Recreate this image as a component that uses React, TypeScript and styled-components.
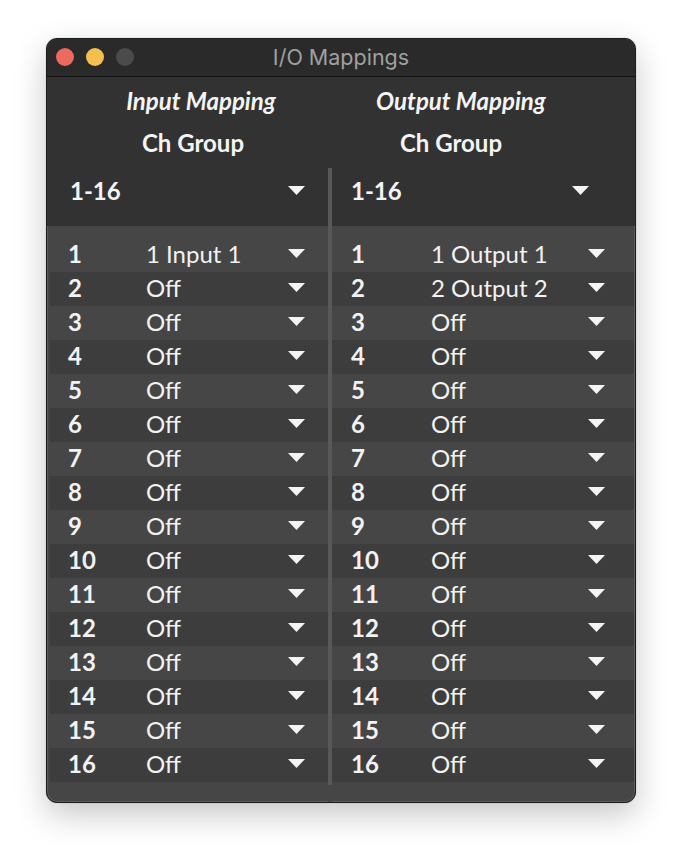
import React from "react";
import styled, { createGlobalStyle } from "styled-components";

const GlobalStyle = createGlobalStyle`
  body {
    margin: 0;
    background: #ffffff;
    font-family: Lato, "Open Sans", sans-serif;
  }
`;

const Page = styled.div`
  padding: 38px 0 0 46px;
  height: 858px;
  box-sizing: border-box;
`;

const Window = styled.div`
  width: 590px;
  height: 765px;
  box-sizing: border-box;
  border: 1px solid #1c1c1c;
  border-radius: 11px;
  overflow: hidden;
  background: #464646;
  box-shadow: inset 0 0 0 1px #5b5b5b, 0 12px 32px rgba(0, 0, 0, 0.22),
    0 0 1px rgba(0, 0, 0, 0.4);
  display: flex;
  flex-direction: column;
`;

const TitleBar = styled.div`
  height: 38px;
  flex-shrink: 0;
  display: flex;
  align-items: center;
  position: relative;
  background: #2a2a2a;
  border-bottom: 1px solid #111111;
  box-sizing: border-box;
  padding: 0 0 1px 9px;
`;

const Lights = styled.div`
  display: flex;
  gap: 12px;
`;

const Light = styled.span<{ $color: string }>`
  width: 18px;
  height: 18px;
  border-radius: 50%;
  background: ${(p) => p.$color};
`;

const Title = styled.div`
  position: absolute;
  left: 0;
  right: 0;
  text-align: center;
  font-family: Inter, "Open Sans", sans-serif;
  font-size: 21.5px;
  color: #a0a0a0;
  pointer-events: none;
`;

const Headings = styled.div`
  background: #323232;
  display: flex;
  padding-top: 3px;
  height: 91px;
  box-sizing: border-box;
`;

const HeadCol = styled.div<{ $width: number }>`
  width: ${(p) => p.$width}px;
  display: flex;
  flex-direction: column;
  color: #f4f4f4;
`;

const HeadText = styled.div<{ $shift: number; $italic?: boolean }>`
  text-align: center;
  padding-left: ${(p) => Math.max(p.$shift, 0) * 2}px;
  padding-right: ${(p) => Math.max(-p.$shift, 0) * 2}px;
  font-weight: 700;
  font-style: ${(p) => (p.$italic ? "italic" : "normal")};
  font-size: 24px;
  line-height: 42px;
  height: 42px;
`;

const Body = styled.div`
  display: flex;
  flex: 1;
`;

const Column = styled.div<{ $width: number }>`
  width: ${(p) => p.$width}px;
  display: flex;
  flex-direction: column;
`;

const GroupRow = styled.div<{ $padLeft: number; $padRight: number }>`
  height: 58px;
  background: #323232;
  display: flex;
  align-items: center;
  justify-content: space-between;
  padding: 0 ${(p) => p.$padRight}px 13px ${(p) => p.$padLeft}px;
  font-size: 24px;
  font-weight: 700;
  color: #f4f4f4;
  box-sizing: border-box;
`;

const RowList = styled.div<{ $left: number; $right: number }>`
  padding: 12px ${(p) => p.$right}px 20px ${(p) => p.$left}px;
`;

const Row = styled.div<{
  $even: boolean;
  $padLeft: number;
  $padRight: number;
  $numWidth: number;
}>`
  height: 34px;
  box-sizing: border-box;
  display: grid;
  grid-template-columns: ${(p) => p.$numWidth}px 1fr auto;
  align-items: center;
  padding: 0 ${(p) => p.$padRight}px 3px ${(p) => p.$padLeft}px;
  background: ${(p) => (p.$even ? "#3d3d3d" : "#464646")};
  color: #f2f2f2;
  font-size: 24px;
`;

const Num = styled.span`
  font-weight: 700;
`;

const Value = styled.span`
  font-weight: 400;
`;

const DividerCol = styled.div`
  width: 4px;
  background: linear-gradient(#323232 58px, #464646 58px);
  display: flex;
  flex-direction: column;
`;

const DividerBar = styled.div`
  flex: 1;
  background: #585858;
  margin-bottom: 17px;
`;

const Caret = () => (
  <svg width="17" height="9" viewBox="0 0 17 9">
    <path d="M0 0h17L8.5 9z" fill="#f4f4f4" />
  </svg>
);

const inputs = ["1 Input 1", ...Array(15).fill("Off")];
const outputs = ["1 Output 1", "2 Output 2", ...Array(14).fill("Off")];

interface SideProps {
  values: string[];
  width: number;
  insetLeft: number;
  insetRight: number;
  padLeft: number;
  padRight: number;
  numWidth: number;
  groupPadLeft: number;
  groupPadRight: number;
}

const Side: React.FC<SideProps> = ({
  values,
  width,
  insetLeft,
  insetRight,
  padLeft,
  padRight,
  numWidth,
  groupPadLeft,
  groupPadRight,
}) => (
  <Column $width={width}>
    <GroupRow $padLeft={groupPadLeft} $padRight={groupPadRight}>
      <span>1-16</span>
      <Caret />
    </GroupRow>
    <RowList $left={insetLeft} $right={insetRight}>
      {values.map((v, i) => (
        <Row
          key={i}
          $even={i % 2 === 1}
          $padLeft={padLeft}
          $padRight={padRight}
          $numWidth={numWidth}
        >
          <Num>{i + 1}</Num>
          <Value>{v}</Value>
          <Caret />
        </Row>
      ))}
    </RowList>
  </Column>
);

export default function App() {
  return (
    <Page>
      <GlobalStyle />
      <Window>
        <TitleBar>
          <Lights>
            <Light $color="#ec6a5e" />
            <Light $color="#f4bf4f" />
            <Light $color="#4b4b4b" />
          </Lights>
          <Title>I/O Mappings</Title>
        </TitleBar>
        <Headings>
          <HeadCol $width={285}>
            <HeadText $italic $shift={11.5}>Input Mapping</HeadText>
            <HeadText $shift={3.5}>Ch Group</HeadText>
          </HeadCol>
          <HeadCol $width={303}>
            <HeadText $italic $shift={-22.5}>Output Mapping</HeadText>
            <HeadText $shift={-32.5}>Ch Group</HeadText>
          </HeadCol>
        </Headings>
        <Body>
          <Side
            values={inputs}
            width={281}
            insetLeft={3}
            insetRight={0}
            padLeft={18}
            padRight={23}
            numWidth={78}
            groupPadLeft={23}
            groupPadRight={23}
          />
          <DividerCol>
            <DividerBar />
          </DividerCol>
          <Side
            values={outputs}
            width={303}
            insetLeft={0}
            insetRight={1}
            padLeft={19}
            padRight={29}
            numWidth={80}
            groupPadLeft={19}
            groupPadRight={46}
          />
        </Body>
      </Window>
    </Page>
  );
}
